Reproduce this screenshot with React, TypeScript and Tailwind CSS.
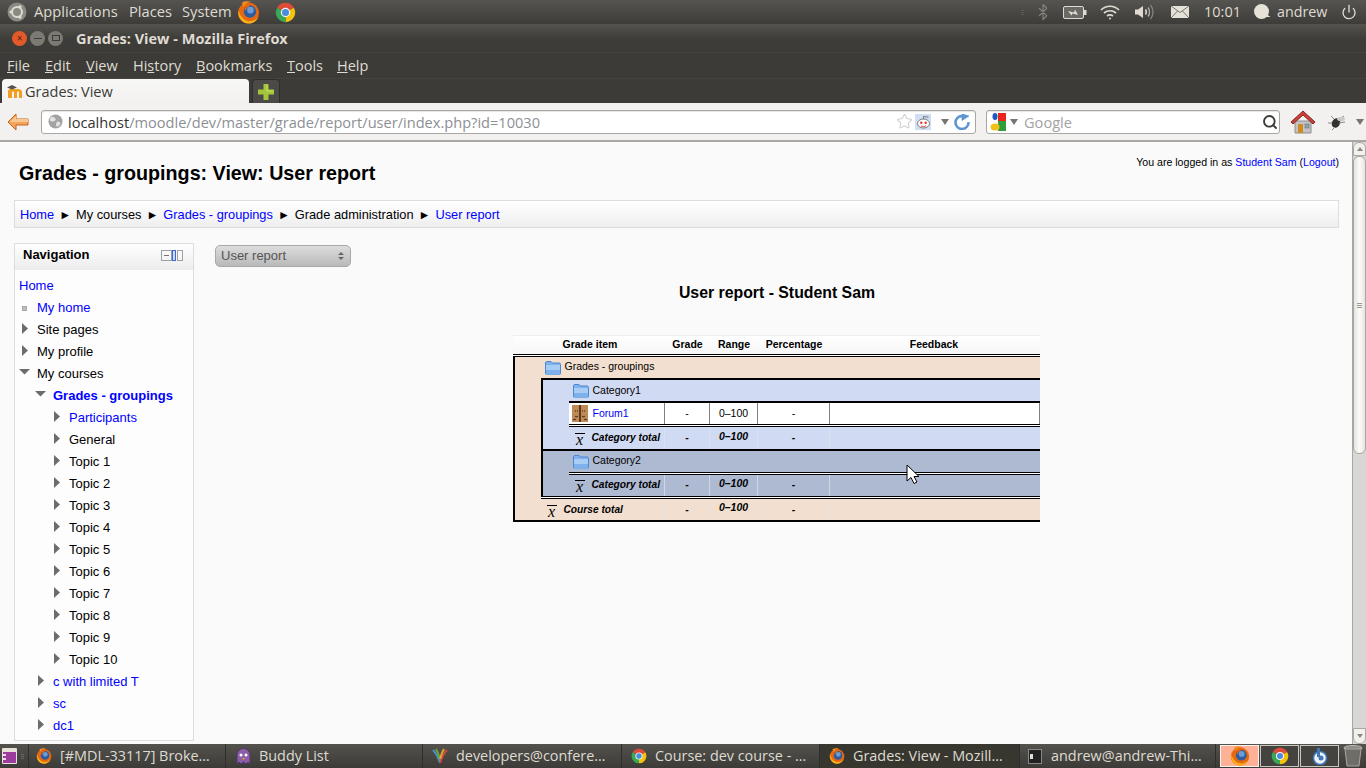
import { ReactNode } from 'react'
import { Bluetooth, Power, Search, Star } from 'lucide-react'

const ui = "font-['Open_Sans',sans-serif]"

function Firefox({ size = 16 }: { size?: number }) {
  return (
    <svg width={size} height={size} viewBox="0 0 24 24" className="shrink-0">
      <circle cx="12" cy="12.500" r="11" fill="#e8680f" />
      <path d="M1.500 10c-1 6 3 13.500 10.500 13.500 5 0 9-3 10.500-7-3 4-8 5.500-12.500 4C6 19 3 15 1.500 10z" fill="#f6b21b" />
      <circle cx="13.500" cy="11" r="6.500" fill="#2e5c9e" />
      <circle cx="14" cy="9.500" r="3.500" fill="#6d9bd3" />
      <path d="M8 11c0-4 2-7 6-8-2 0-2 2-1 3-2 0-3 2-5 5z" fill="#e8680f" />
      <path d="M5 2c3-2 7-2 10-1-4 0-7 2-8 5z" fill="#f28c1e" />
    </svg>
  )
}

function Chrome({ size = 16 }: { size?: number }) {
  return (
    <svg width={size} height={size} viewBox="0 0 24 24" className="shrink-0">
      <path d="M12 12 2.470 6.500A11 11 0 0 1 21.530 6.500Z" fill="#dd4b39" />
      <path d="M12 12 21.530 6.500A11 11 0 0 1 12 23Z" fill="#f4c20d" />
      <path d="M12 12 12 23A11 11 0 0 1 2.470 6.500Z" fill="#3aa757" />
      <circle cx="12" cy="12" r="5.400" fill="#f2f2f2" />
      <circle cx="12" cy="12" r="4" fill="#4a8bdc" />
    </svg>
  )
}

function UbuntuLogo() {
  return (
    <svg width="20" height="20" viewBox="0 0 20 20">
      <circle cx="10" cy="10" r="9.500" fill="#8b8982" />
      <circle cx="10" cy="10" r="5" fill="none" stroke="#dedbd2" strokeWidth="2" />
      <circle cx="4" cy="10" r="1.600" fill="#dedbd2" />
      <circle cx="13" cy="4.800" r="1.600" fill="#dedbd2" />
      <circle cx="13" cy="15.200" r="1.600" fill="#dedbd2" />
    </svg>
  )
}

function TopPanel() {
  return (
    <div className={`${ui} flex h-6 shrink-0 items-center bg-gradient-to-b from-[#565450] to-[#3d3c38] text-[14.7px] text-[#dfdbd2]`}>
      <div className="ml-[7px] flex w-[27px]"><UbuntuLogo /></div>
      <span className="w-[95px] pb-[2px]">Applications</span>
      <span className="w-[53px] pb-[2px]">Places</span>
      <span className="w-[55px] pb-[2px]">System</span>
      <Firefox size={23} />
      <div className="ml-[15px]"><Chrome size={21} /></div>
      <div className="ml-auto flex items-center">
        <div className="mr-[10px] flex flex-col gap-px">
          <div className="h-px w-[3px] bg-[#5c5a55]" />
          <div className="h-px w-[3px] bg-[#5c5a55]" />
          <div className="h-px w-[3px] bg-[#5c5a55]" />
        </div>
        <Bluetooth className="h-[18px] w-[18px] text-[#85837d]" strokeWidth={1.500} />
        <svg width="24" height="13" viewBox="0 0 24 13" className="ml-[11px]">
          <rect x="0.500" y="0.500" width="20" height="12" rx="1.500" fill="#6b6963" stroke="#dfdbd2" />
          <rect x="21" y="4" width="2.500" height="5" fill="#dfdbd2" />
          <path d="M5 5l6 1.500 1-3 3 5.500-5.500-1.500-1 2z" fill="#dfdbd2" />
        </svg>
        <svg width="20" height="15" viewBox="0 0 20 15" fill="none" stroke="#dfdbd2" strokeWidth="1.700" className="ml-[13px]">
          <path d="M1 5c5-5 13-5 18 0M4 8c3.500-3 8.500-3 12 0M7 11c2-1.500 4-1.500 6 0" />
          <circle cx="10" cy="13.500" r="1" fill="#dfdbd2" stroke="none" />
        </svg>
        <svg width="20" height="16" viewBox="0 0 20 16" fill="none" className="ml-[15px]">
          <path d="M0 5.500h3L8 2v12L3 10.500H0z" fill="#dfdbd2" />
          <path d="M10.500 5.500c1 1.500 1 3.500 0 5" stroke="#dfdbd2" strokeWidth="1.500" />
          <path d="M13 3.500c2 2.500 2 6.500 0 9" stroke="#b5b2aa" strokeWidth="1.300" />
          <path d="M15.500 1c3.300 4 3.300 10 0 14" stroke="#85837d" strokeWidth="1.300" />
        </svg>
        <svg width="18" height="12" viewBox="0 0 18 12" className="ml-[16px]">
          <rect width="18" height="12" fill="#e6e2d8" />
          <path d="M0 0l9 6.500L18 0M0 12l6.500-7M18 12l-6.500-7" fill="none" stroke="#77756e" />
        </svg>
        <span className="ml-[15px] w-[34px] text-[14.5px]">10:01</span>
        <svg width="18" height="16" viewBox="0 0 18 16" className="ml-[15px]">
          <circle cx="8.500" cy="7.500" r="7.500" fill="#e6e2d8" />
          <path d="M4 13h13.500l-4-3z" fill="#e6e2d8" />
        </svg>
        <span className="ml-[6px] w-[49px] text-[14.3px]">andrew</span>
        <Power className="ml-[15px] mr-[9px] h-[16px] w-[16px] text-[#dfdbd2]" strokeWidth={2} />
      </div>
    </div>
  )
}

function TitleBar() {
  return (
    <div className={`${ui} flex h-7 shrink-0 items-center bg-gradient-to-b from-[#55534e] via-[#3f3d39] to-[#3c3b37] pl-[12px]`}>
      <div className="flex h-[15px] w-[15px] items-center justify-center rounded-full bg-[#e2592a] text-[10px] leading-none text-[#5a2412]">×</div>
      <div className="ml-[3px] flex h-[15px] w-[15px] items-center justify-center rounded-full bg-[#7c7a73]">
        <div className="h-px w-[8px] bg-[#3c3b37]" />
      </div>
      <div className="ml-[3px] flex h-[15px] w-[15px] items-center justify-center rounded-full bg-[#7c7a73]">
        <div className="h-[6px] w-[8px] border border-[#3c3b37]" />
      </div>
      <span className="ml-[13px] pt-[2px] text-[14.5px] font-bold text-[#dfdbd2]">Grades: View - Mozilla Firefox</span>
    </div>
  )
}

function MenuBar() {
  const items: [string, string, string, string][] = [
    ['', 'F', 'ile', 'w-[38px]'],
    ['', 'E', 'dit', 'w-[41px]'],
    ['', 'V', 'iew', 'w-[47px]'],
    ['Hi', 's', 'tory', 'w-[63px]'],
    ['', 'B', 'ookmarks', 'w-[91px]'],
    ['', 'T', 'ools', 'w-[50px]'],
    ['', 'H', 'elp', 'w-[40px]'],
  ]
  return (
    <div className={`${ui} flex h-[26px] shrink-0 items-center border-t border-[#45433f] bg-[#3c3b37] pl-[7px] text-[14.5px] text-[#dfdbd2]`}>
      {items.map(([pre, key, rest, width]) => (
        <span key={key} className={width}>
          {pre}<span className="underline">{key}</span>{rest}
        </span>
      ))}
    </div>
  )
}

function MoodleIcon() {
  return (
    <svg width="16" height="15" viewBox="0 0 16 15" className="shrink-0">
      <path d="M1 14V7c0-1 1-2 2-2h8c2 0 4 1 4 3v6h-3V8.500c0-.8-.4-1-1-1s-1 .2-1 1V14H7V8.500c0-.8-.4-1-1-1s-1 .2-1 1V14z" fill="#f0a01e" />
      <path d="M0 3.500 5 1l5 2.500L5 5.500z" fill="#55534e" />
    </svg>
  )
}

function TabBar() {
  return (
    <div className={`${ui} flex h-[25px] shrink-0 items-end border-t border-[#45433f] bg-[#3c3b37] pl-[2px]`}>
      <div className="flex h-[24px] w-[247px] items-center rounded-t-[4px] bg-gradient-to-b from-[#f8f8f7] to-[#f2f1f0] pl-[5px] text-[14.5px] text-[#3c3b37]">
        <MoodleIcon />
        <span className="ml-[2px] pt-[2px]">Grades: View</span>
      </div>
      <div className="ml-[3px] flex h-[24px] w-[28px] items-center justify-center rounded-t-[4px] border border-b-0 border-[#2f2e2b] bg-[#4c4a46]">
        <svg width="16" height="16" viewBox="0 0 16 16">
          <path d="M5.500 0h5v5.500H16v5h-5.500V16h-5v-5.500H0v-5h5.500z" fill="#a4c639" />
          <path d="M6.500 1h3v5.500H15v1H8.500V1z" fill="#c6de6a" />
        </svg>
      </div>
    </div>
  )
}

function Caret() {
  return <div className="h-0 w-0 border-x-[4px] border-t-[6px] border-x-transparent border-t-[#77756f]" />
}

function NavBar() {
  return (
    <div className={`${ui} flex h-[39px] shrink-0 items-center border-b-2 border-[#a9a7a3] bg-[#f2f1f0] pl-[7px]`}>
      <svg width="22" height="18" viewBox="0 0 22 18" className="shrink-0">
        <path d="M9 1 1 9l8 8v-5h12V6H9z" fill="#f3a55e" stroke="#c4621c" strokeLinejoin="round" />
        <path d="M9 3 3 9h18V6H9z" fill="#f8c793" />
      </svg>
      <div className="ml-[12px] flex h-[24px] w-[935px] items-center rounded-[3px] border border-[#a9a7a3] bg-white pl-[6px] text-[14.6px] shadow-[inset_0_1px_1px_#e5e5e5]">
        <svg width="15" height="15" viewBox="0 0 16 16" className="shrink-0">
          <circle cx="8" cy="8" r="7.500" fill="#a3a3a3" />
          <path d="M4 3c2 0 3 1 4 2S7 8 5 8 2 7 2 6s1-3 2-3zm6 5c2 0 4 1 3 3s-3 3-4 2 0-5 1-5z" fill="#e2e2e2" />
        </svg>
        <span className="ml-[5px] pt-[2px] text-[#333]">localhost</span>
        <span className="pt-[2px] text-[#8c8f94]">/moodle/dev/master/grade/report/user/index.php?id=10030</span>
        <div className="ml-auto flex items-center">
          <Star className="h-[17px] w-[17px] text-[#cfcfcf]" strokeWidth={1.500} />
          <div className="ml-[2px] flex h-[16px] w-[16px] items-center justify-center bg-[#cfe0f5]">
            <svg width="15" height="14" viewBox="0 0 15 14">
              <ellipse cx="7.500" cy="8.500" rx="6" ry="4.500" fill="#fff" stroke="#777" />
              <circle cx="5.300" cy="7.800" r="1.200" fill="#e53b2e" />
              <circle cx="9.700" cy="7.800" r="1.200" fill="#e53b2e" />
              <path d="M7.500 4V1.500L11 2" fill="none" stroke="#777" />
              <circle cx="11.500" cy="2" r="1.200" fill="#aaa" />
              <path d="M5 10.800c1.500 1 3.500 1 5 0" fill="none" stroke="#e53b2e" />
            </svg>
          </div>
          <div className="ml-[10px]"><Caret /></div>
          <svg width="16" height="16" viewBox="0 0 16 16" className="ml-[5px] mr-[5px]">
            <path d="M13.500 8.500A5.500 5.500 0 1 1 8 3v3.500L15 2 8 0v1A7.500 7.500 0 1 0 15.500 8.500z" fill="#5c97d6" stroke="#3f78b8" strokeWidth="0.500" />
          </svg>
        </div>
      </div>
      <div className="ml-[10px] flex h-[24px] w-[294px] items-center rounded-[3px] border border-[#a9a7a3] bg-white pl-[3px] text-[14.6px] text-[#a3a3a3] shadow-[inset_0_1px_1px_#e5e5e5]">
        <svg width="16" height="18" viewBox="0 0 16 18" className="shrink-0">
          <rect width="16" height="18" fill="#fff" />
          <rect x="8" y="0" width="8" height="8" fill="#e8261c" />
          <rect x="8" y="8" width="8" height="10" fill="#2f9e3a" />
          <rect x="0" y="6" width="8" height="5" fill="#fff" />
          <ellipse cx="5" cy="3.500" rx="2.500" ry="3.500" fill="#1c57c4" />
          <ellipse cx="5" cy="14" rx="4.500" ry="3.500" fill="#f3bf1b" />
        </svg>
        <div className="ml-[4px]"><Caret /></div>
        <span className="ml-[6px] pt-[2px]">Google</span>
        <Search className="ml-auto mr-[1px] h-[16px] w-[16px] text-[#3c3b37]" strokeWidth={2.800} />
      </div>
      <svg width="24" height="24" viewBox="0 0 24 24" className="ml-[11px] shrink-0">
        <path d="M4 11h16v12H4z" fill="#c3c4c6" stroke="#8d8e90" />
        <path d="M12 1 0 12l2 2L12 5l10 9 2-2z" fill="#c8413a" stroke="#8e2721" />
        <rect x="7" y="14" width="5" height="9" fill="#d08a1d" />
        <rect x="14" y="14" width="4" height="4" fill="#8fa2b5" stroke="#666" strokeWidth="0.500" />
      </svg>
      <svg width="18" height="16" viewBox="0 0 18 16" className="ml-[13px] shrink-0">
        <ellipse cx="8" cy="9" rx="4" ry="5" fill="#33322f" transform="rotate(30 8 9)" />
        <path d="M10 6 16 2M11 9l6-1M6 5 3 2M4 9H0M7 13l-3 3" stroke="#8a8984" fill="none" />
        <ellipse cx="13" cy="5" rx="4" ry="2" fill="#c9c9c5" />
      </svg>
      <div className="ml-[10px]"><Caret /></div>
    </div>
  )
}

function Triangle({ open }: { open: boolean }) {
  return (
    <svg width="12" height="14" viewBox="0 0 12 14" className="mb-[3px] shrink-0">
      {open ? <path d="M0 3h11L5.500 8.500z" fill="#6c6c6c" /> : <path d="M3 1v11l6-5.500z" fill="#6c6c6c" />}
    </svg>
  )
}

interface NavNodeProps {
  level: number
  label: string
  link?: boolean
  open?: boolean
  leaf?: boolean
  bold?: boolean
}

const levelPad = ['pl-[4px]', 'pl-[4px]', 'pl-[20px]', 'pl-[36px]']

function NavNode({ level, label, link, open, leaf, bold }: NavNodeProps) {
  return (
    <div className={`flex h-[22px] items-center ${levelPad[level]}`}>
      {level > 0 && (
        <div className="flex w-[18px] items-center">
          {leaf ? <div className="ml-[3px] h-[5px] w-[5px] border border-[#aaa] bg-[#bbb]" /> : <Triangle open={!!open} />}
        </div>
      )}
      <span className={`${link ? 'text-[#0000ff]' : 'text-black'} ${bold ? 'font-bold' : ''}`}>{label}</span>
    </div>
  )
}

function NavigationBlock() {
  const topics = ['General', 'Topic 1', 'Topic 2', 'Topic 3', 'Topic 4', 'Topic 5', 'Topic 6', 'Topic 7', 'Topic 8', 'Topic 9', 'Topic 10']
  return (
    <div className="h-[498px] w-[180px] shrink-0 border border-[#dddddd] bg-[#fdfdfd] text-[13px]">
      <div className="flex h-[26px] items-center bg-gradient-to-b from-white to-[#ececec] pb-[4px] pl-[8px] pr-[10px]">
        <span className="font-bold text-black">Navigation</span>
        <div className="ml-auto flex items-center">
          <div className="flex h-[11px] w-[11px] items-center justify-center border border-[#9aa0a8]">
            <div className="h-px w-[5px] bg-[#777]" />
          </div>
          <div className="h-[11px] w-[4px] border border-[#3a66d8] bg-[#cfdcf5]" />
          <div className="ml-px h-[11px] w-[6px] border border-[#9aa0a8]" />
        </div>
      </div>
      <div className="pt-[5px]">
        <NavNode level={0} label="Home" link />
        <NavNode level={1} label="My home" link leaf />
        <NavNode level={1} label="Site pages" />
        <NavNode level={1} label="My profile" />
        <NavNode level={1} label="My courses" open />
        <NavNode level={2} label="Grades - groupings" link open bold />
        <NavNode level={3} label="Participants" link />
        {topics.map((t) => <NavNode key={t} level={3} label={t} />)}
        <NavNode level={2} label="c with limited T" link />
        <NavNode level={2} label="sc" link />
        <NavNode level={2} label="dc1" link />
      </div>
    </div>
  )
}

function FolderIcon() {
  return (
    <svg width="16" height="14" viewBox="0 0 16 14" className="shrink-0">
      <path d="M.5 2c0-1 .5-1.500 1.500-1.500h4l1.500 1.500H14c1 0 1.500.5 1.500 1.500v9c0 .5-.5 1-1 1h-13c-.5 0-1-.5-1-1z" fill="#7fb2ec" stroke="#4a86cf" />
      <rect x="1" y="4" width="14" height="9.500" fill="#a8cdf5" />
      <rect x="1" y="9" width="14" height="4.500" fill="#7fb2ec" />
    </svg>
  )
}

function ForumIcon() {
  return (
    <svg width="16" height="17" viewBox="0 0 16 17" className="shrink-0">
      <rect width="16" height="17" fill="#c08a56" />
      <rect x="7" width="2" height="17" fill="#5c3a1c" />
      <path d="M3 6h1M5 6h1M10 6h1M12 6h1M3 11c1 1 2 1 3 0M10 11c1 1 2 1 3 0M1 15c1-1 2-1 3 0M12 15c1-1 2-1 3 0" stroke="#2b1a0c" fill="none" />
    </svg>
  )
}

function Mean() {
  return (
    <div className="flex w-[23px] shrink-0 justify-start pl-[6px]">
      <div className="flex w-[10px] flex-col items-center pt-[2px] font-['Liberation_Serif',serif] text-[16px] font-normal italic leading-[11px] text-black">
        <div className="h-px w-[10px] bg-black" />
        <span>x</span>
      </div>
    </div>
  )
}

function BlackLine({ className = '' }: { className?: string }) {
  return <div className={`h-[2px] bg-black ${className}`} />
}

function DoubleLine() {
  return (
    <div className="h-[3px] border-y border-black bg-white" />
  )
}

interface GradeRowProps {
  children: ReactNode
  tall?: boolean
  white?: boolean
  bold?: boolean
  lift?: boolean
}

// one row of the report, with the fixed grade/range/percentage/feedback cells
function GradeRow({ children, tall, white, bold, lift }: GradeRowProps) {
  const line = white ? 'border-l border-[#808080]' : 'border-l border-[#dfe3ea]/70'
  const value = `flex items-center justify-center pl-px ${line}`
  const rangeLift = !bold ? '' : tall ? 'pb-[2px]' : 'pb-[3px]'
  return (
    <div className={`flex ${tall ? 'h-[22px]' : 'h-[21px]'} ${white ? 'bg-white' : ''} ${bold ? 'font-bold italic' : ''}`}>
      <div className={`flex min-w-0 flex-1 items-center whitespace-nowrap ${bold ? 'text-[10.2px]' : ''} ${lift ? 'pb-[2px]' : ''}`}>{children}</div>
      <div className={`${value} w-[45px] ${lift ? 'pb-[2px]' : ''}`}>-</div>
      <div className={`${value} w-[48px] ${rangeLift}`}>0–100</div>
      <div className={`${value} w-[72px] ${lift ? 'pb-[2px]' : ''}`}>-</div>
      <div className={`${line} w-[211px] ${white ? 'border-r' : ''}`} />
    </div>
  )
}

function CategoryRow({ label, lift }: { label: string; lift?: boolean }) {
  return (
    <div className="flex h-[21px] items-center pl-[4px]">
      <FolderIcon />
      <span className={`ml-[4px] ${lift ? 'pb-[2px]' : ''}`}>{label}</span>
    </div>
  )
}

function GradeTable() {
  return (
    <div className="w-[527px] font-['Liberation_Sans',sans-serif] text-[10.5px] text-black">
      <div className="flex h-[19px] items-center border-t border-[#eeeeee] bg-gradient-to-b from-white to-[#f6f6f6] font-bold">
        <div className="flex-1 pl-[50px]">Grade item</div>
        <div className="w-[45px] pl-[3px] text-center">Grade</div>
        <div className="w-[48px] pl-[3px] text-center">Range</div>
        <div className="w-[72px] pl-[3px] text-center">Percentage</div>
        <div className="w-[211px] text-center">Feedback</div>
      </div>
      <DoubleLine />
      <div className="flex border-l-2 border-black bg-[#f3dfd0]">
        <div className="w-[26px] shrink-0" />
        <div className="min-w-0 flex-1">
          <CategoryRow label="Grades - groupings" lift />
          <BlackLine />
          <div className="border-l-2 border-black">
            <div className="flex bg-[#d0daf2]">
              <div className="w-[26px] shrink-0" />
              <div className="min-w-0 flex-1">
                <CategoryRow label="Category1" />
                <BlackLine />
                <GradeRow white>
                  <div className="ml-[3px]"><ForumIcon /></div>
                  <span className="ml-[5px] text-[#0000ff]">Forum1</span>
                </GradeRow>
                <DoubleLine />
                <GradeRow tall bold><Mean /><span>Category total</span></GradeRow>
              </div>
            </div>
            <BlackLine />
            <div className="flex bg-[#aeb9d2]">
              <div className="w-[26px] shrink-0" />
              <div className="min-w-0 flex-1">
                <CategoryRow label="Category2" lift />
                <DoubleLine />
                <GradeRow bold lift><Mean /><span>Category total</span></GradeRow>
              </div>
            </div>
          </div>
          <DoubleLine />
          <GradeRow bold><Mean /><span>Course total</span></GradeRow>
        </div>
      </div>
      <BlackLine />
    </div>
  )
}

function Breadcrumb() {
  const sep = <span className="mx-[5px] text-[12px] text-black">►</span>
  return (
    <div className="flex h-[28px] items-center border border-[#dddddd] bg-gradient-to-b from-white to-[#eeeeee] pl-[5px] pt-px text-[12.8px] text-black">
      <span className="text-[#0000ff]">Home</span>{sep}
      <span>My courses</span>{sep}
      <span className="text-[#0000ff]">Grades - groupings</span>{sep}
      <span>Grade administration</span>{sep}
      <span className="text-[#0000ff]">User report</span>
    </div>
  )
}

function Scrollbar() {
  return (
    <div className="flex w-[14px] shrink-0 flex-col border-l border-[#a9a7a3] bg-[#d9d7d5]">
      <div className="flex h-[14px] items-center justify-center rounded-t-[6px] border border-[#a9a7a3] bg-[#f2f1f0]">
        <div className="h-0 w-0 border-x-[3px] border-b-[4px] border-x-transparent border-b-[#8a8883]" />
      </div>
      <div className="flex h-[298px] flex-col items-center justify-center gap-px rounded-[6px] border border-[#a9a7a3] bg-gradient-to-r from-[#e6e4e2] via-[#fbfbfa] to-[#e6e4e2]">
        <div className="h-px w-[5px] bg-[#9a9894]" />
        <div className="h-px w-[5px] bg-[#9a9894]" />
        <div className="h-px w-[5px] bg-[#9a9894]" />
      </div>
      <div className="flex-1" />
      <div className="flex h-[16px] items-center justify-center rounded-b-[6px] border border-[#a9a7a3] bg-[#f2f1f0]">
        <div className="h-0 w-0 border-x-[3px] border-t-[4px] border-x-transparent border-t-[#8a8883]" />
      </div>
    </div>
  )
}

function PageContent() {
  return (
    <div className="flex min-h-0 flex-1">
      <div className="relative min-w-0 flex-1 overflow-hidden bg-[#fafafa] pl-[14px] pr-[13px] font-['Liberation_Sans',sans-serif]">
        <div className="flex h-[58px] items-start justify-between">
          <h1 className="pl-[5px] pt-[19px] text-[19.7px] font-bold leading-[24px] text-black">Grades - groupings: View: User report</h1>
          <div className="pt-[14px] text-[10.6px] leading-[13px] text-black">
            You are logged in as <span className="text-[#0000ff]">Student Sam</span> (<span className="text-[#0000ff]">Logout</span>)
          </div>
        </div>
        <Breadcrumb />
        <div className="mt-[15px] flex">
          <NavigationBlock />
          <div className="ml-[21px] min-w-0 flex-1 pt-[2px]">
            <div className="flex h-[22px] w-[136px] items-center justify-between rounded-[5px] border border-[#a8a8a8] bg-gradient-to-b from-[#dddddd] to-[#b9b9b9] pl-[5px] pr-[6px] text-[13px] text-[#555555]">
              <span>User report</span>
              <div className="flex flex-col gap-[2px]">
                <div className="h-0 w-0 border-x-[3px] border-b-[3px] border-x-transparent border-b-[#666]" />
                <div className="h-0 w-0 border-x-[3px] border-t-[3px] border-x-transparent border-t-[#666]" />
              </div>
            </div>
            <h2 className="mt-[16px] text-center text-[15.84px] font-bold leading-[19px] text-black">User report - Student Sam</h2>
            <div className="mt-[33px] flex justify-center pr-[2px]"><GradeTable /></div>
          </div>
        </div>
        {/* mouse pointer sitting over the table */}
        <svg width="14" height="21" viewBox="0 0 14 21" className="absolute left-[906px] top-[322px]">
          <path d="M1 1v16l4-3.500 3 6 3-1.500-3-5.500h5z" fill="#fff" stroke="#000" strokeLinejoin="round" />
        </svg>
      </div>
      <Scrollbar />
    </div>
  )
}

interface TaskItemProps {
  icon: ReactNode
  label: string
  width: string
  active?: boolean
  tight?: boolean
}

function TaskItem({ icon, label, width, active, tight }: TaskItemProps) {
  return (
    <div className={`flex h-full shrink-0 items-center border-r border-[#2f2e2b] ${tight ? 'pl-[6px]' : 'pl-[8px]'} ${width} ${active ? 'bg-[#37362f]' : ''}`}>
      <div className="flex w-[18px] justify-center">{icon}</div>
      <span className="ml-[7px] truncate">{label}</span>
    </div>
  )
}

function Launcher({ children, hot }: { children: ReactNode; hot?: boolean }) {
  return (
    <div className={`flex h-[22px] w-[39px] items-center justify-center border ${hot ? 'border-[#f5f3ee] bg-[#ffb197]' : 'border-[#c9c6bd] bg-[#45433f]'}`}>
      {children}
    </div>
  )
}

function Taskbar() {
  return (
    <div className={`${ui} flex h-6 shrink-0 items-center bg-gradient-to-b from-[#54524d] to-[#3c3b37] text-[14.4px] text-[#dfdbd2]`}>
      <div className="flex h-full w-[29px] shrink-0 items-center border-r border-[#2f2e2b] pl-[2px]">
        <svg width="15" height="16" viewBox="0 0 15 16">
          <rect width="15" height="16" rx="1" fill="#e6e2d8" />
          <rect x="1" y="4" width="13" height="11" fill="#9c3c9c" />
          <rect x="1" y="6" width="3" height="2" fill="#f0d8f0" />
          <rect x="1" y="10" width="3" height="2" fill="#f0d8f0" />
        </svg>
        <div className="ml-[4px] flex flex-col gap-px">
          <div className="h-px w-[3px] bg-[#6a6863]" />
          <div className="h-px w-[3px] bg-[#6a6863]" />
          <div className="h-px w-[3px] bg-[#6a6863]" />
        </div>
      </div>
      <TaskItem tight width="w-[197px]" label="[#MDL-33117] Broke…" icon={<Firefox />} />
      <TaskItem
        width="w-[197px]"
        label="Buddy List"
        icon={
          <svg width="15" height="17" viewBox="0 0 15 17">
            <path d="M1 16V7a6.500 6.500 0 0 1 13 0v9l-2-2-2 2-2.500-2L5 16l-2-2z" fill="#8b5fa8" stroke="#56356e" />
            <circle cx="5" cy="7" r="1.500" fill="#fff" />
            <circle cx="10" cy="7" r="1.500" fill="#fff" />
            <path d="M6 10h3l-1.500 2z" fill="#f0a01e" />
          </svg>
        }
      />
      <TaskItem
        width="w-[199px]"
        label="developers@confere…"
        icon={
          <svg width="16" height="16" viewBox="0 0 16 16" fill="none" strokeWidth="2">
            <path d="M1 2c3 3 5 7 7 13" stroke="#4a90c8" />
            <path d="M15 2c-3 3-5 7-7 13" stroke="#d0483c" />
            <path d="M4 1c2 3 3 7 4 10" stroke="#6ba53a" />
            <path d="M12 1c-2 3-3 7-4 10" stroke="#e0a82e" />
          </svg>
        }
      />
      <TaskItem width="w-[198px]" label="Course: dev course - …" icon={<Chrome />} />
      <TaskItem width="w-[200px]" label="Grades: View - Mozill…" icon={<Firefox />} active />
      <TaskItem
        tight
        width="w-[196px]"
        label="andrew@andrew-Thi…"
        icon={
          <div className="flex h-[15px] w-[14px] items-center border border-[#888] bg-[#222] pl-px">
            <div className="h-[5px] w-[3px] bg-[#ddd]" />
          </div>
        }
      />
      <div className="ml-[4px] flex items-center gap-px">
        <Launcher hot><Firefox size={20} /></Launcher>
        <Launcher><Chrome size={18} /></Launcher>
        <Launcher>
          <svg width="16" height="18" viewBox="0 0 16 18" fill="none">
            <circle cx="8" cy="11" r="6.500" fill="#eef2f8" stroke="#3f78b8" strokeWidth="1.500" />
            <path d="M5 1h3v9H5z" fill="#3f78b8" />
            <circle cx="9" cy="11" r="2.500" fill="#3f78b8" />
          </svg>
        </Launcher>
      </div>
      <svg width="20" height="22" viewBox="0 0 20 22" className="ml-[4px] shrink-0">
        <ellipse cx="10" cy="3" rx="9" ry="2.500" fill="#8e8c86" stroke="#bdbbb5" />
        <path d="M2 4l2 17h12l2-17z" fill="#6f6d68" stroke="#a9a7a1" />
      </svg>
    </div>
  )
}

export default function App() {
  return (
    <div className="flex h-[768px] w-[1366px] flex-col overflow-hidden">
      <TopPanel />
      <TitleBar />
      <MenuBar />
      <TabBar />
      <NavBar />
      <PageContent />
      <Taskbar />
    </div>
  )
}
